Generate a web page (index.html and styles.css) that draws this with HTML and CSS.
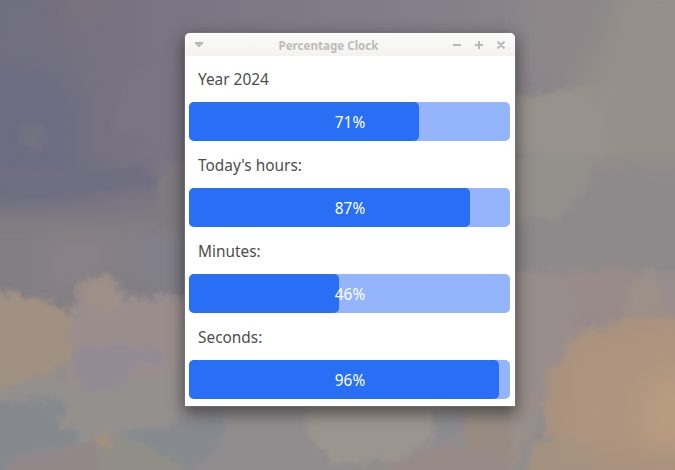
FILE: index.html
```html
<!DOCTYPE html>
<html lang="en">
<head>
<meta charset="utf-8">
<title>Percentage Clock</title>
<link rel="stylesheet" href="styles.css">
</head>
<body>
<svg class="wallpaper" viewBox="0 0 675 470" preserveAspectRatio="none" aria-hidden="true">
  <defs>
    <linearGradient id="sky" x1="0" y1="0" x2="1" y2="0">
      <stop offset="0" stop-color="#716f80"/>
      <stop offset=".3" stop-color="#7b7683"/>
      <stop offset=".7" stop-color="#85808a"/>
      <stop offset="1" stop-color="#918c8a"/>
    </linearGradient>
    <filter id="soft" x="-30%" y="-30%" width="160%" height="160%" color-interpolation-filters="sRGB">
      <feGaussianBlur stdDeviation="13"/>
    </filter>
    <filter id="brush" x="-15%" y="-15%" width="130%" height="130%" color-interpolation-filters="sRGB">
      <feTurbulence type="fractalNoise" baseFrequency=".07" numOctaves="4" seed="7" result="n"/>
      <feGaussianBlur in="SourceGraphic" stdDeviation="3" result="b"/>
      <feDisplacementMap in="b" in2="n" scale="16" xChannelSelector="R" yChannelSelector="G"/>
    </filter>
  </defs>
  <rect width="675" height="470" fill="url(#sky)"/>
  <g filter="url(#soft)">
    <path fill="#6c6d82" d="M-20 70H50L80 110 75 195H-20z"/>
    <path fill="#706f80" d="M-20 -20H50V20H-20z"/>
    <path fill="#7a717c" d="M65 -20H110L95 30H65z"/>
    <path fill="#8d8789" d="M520 -20H600L590 85H520z"/>
    <path fill="#959089" d="M700 -20H625L600 60 570 95 550 170 700 210z"/>
    <path fill="#827e83" d="M-40 210H190V320H-40z"/>
    <path fill="#898185" d="M50 235H120L100 290H40z"/>
    <path fill="#817f89" d="M125 230H190V290H135z"/>
    <path fill="#8e898b" d="M500 165H710V280H500z"/>
    <path fill="#918d8e" d="M-40 330H710V510H-40z"/>
  </g>
  <g filter="url(#brush)">
    <path fill="#747280" d="M20 125H45V152H20z"/>
    <path fill="#7a7582" d="M112 118L130 75 190 55V155L170 148 135 135 115 132z"/>
    <path fill="#706f81" d="M0 165H145L158 188 110 190 80 196 30 199 0 197z"/>
    <path fill="#7e7b81" d="M160 168L190 156V230H155z"/>
    <path fill="#97928b" d="M510 98L545 92 590 85 610 120V155L575 160 510 150z"/>
    <path fill="#93908c" d="M510 155H600L585 190 560 220H515z"/>
    <path fill="#8d888a" d="M605 175L640 170 645 210 690 210V270H510V235L570 215z"/>
    <path fill="#988d8d" d="M500 272L570 271 620 268 690 273V400H500z"/>
    <path fill="#988b89" d="M575 276L617 266 640 272 650 320 575 335z"/>
    <path fill="#9c9089" d="M630 279L655 275 665 310 625 320z"/>
    <path fill="#9a8e8d" d="M68 320L85 278 115 280 128 300 190 294V390H65z"/>
    <path fill="#9e8f88" d="M80 285L88 277 113 282 123 304 105 315 82 305z"/>
    <path fill="#938a94" d="M75 350L120 345 165 350V365L140 362 105 400 75 380z"/>
    <path fill="#a09182" d="M-20 288L20 295 65 305 72 330 70 364 45 376 0 389H-20z"/>
    <path fill="#93908e" d="M-20 392L55 378 90 392 190 366V432L120 445H-20z"/>
    <path fill="#85898d" d="M-20 407L25 400 62 400 60 424 78 436 70 448 30 455 10 480H-20z"/>
    <path fill="#868a8e" d="M118 432L160 428 220 412 225 430 208 455 190 475 160 455 135 442z"/>
    <path fill="#938889" d="M10 463L35 452 65 450 75 442 100 440 105 480H5z"/>
    <path fill="#a09081" d="M97 433H111V448H95z"/>
    <path fill="#918e87" d="M100 450L120 438 155 448 175 462 170 490H100z"/>
    <path fill="#9c958f" d="M306 395H445L440 435 400 460 335 463 320 448 306 427z"/>
    <path fill="#8b8b8e" d="M435 413L465 415 458 440 430 448z"/>
    <path fill="#968a87" d="M390 465L430 450 460 445 515 450V490H380z"/>
    <path fill="#968c83" d="M465 400H520V460L465 453z"/>
    <path fill="#9a8f89" d="M510 390L545 395 530 430 515 470H510z"/>
    <path fill="#a9927f" d="M545 395L548 368 565 362 565 345 580 332 605 328 630 320 655 317 690 318V490H535L535 460 550 440 544 412z"/>
    <path fill="#a49280" d="M535 445L570 430 600 450 590 490H520z"/>
  </g>
  <g filter="url(#soft)">
    <path fill="#ae957f" d="M575 350L690 320V450H565z"/>
    <path fill="#b99b80" d="M645 385L700 365V450H638z"/>
  </g>
</svg>
<main class="window">
  <header class="titlebar">
    <svg class="menu" viewBox="0 0 9 6" aria-hidden="true"><path d="M.4 0H8.6V1.2L4.5 5.6.4 1.2z"/></svg>
    <h1 class="title">Percentage Clock</h1>
    <svg class="controls" viewBox="0 0 54 10" aria-hidden="true">
      <path d="M1 5H9M23 5H31M27 1V9M45.5 1.5L52.5 8.5M52.5 1.5L45.5 8.5"/>
    </svg>
  </header>
  <section class="content">
    <p class="label">Year 2024</p>
    <div class="bar"><div class="fill" style="width:230px"></div><span class="value">71%</span></div>
    <p class="label">Today's hours:</p>
    <div class="bar"><div class="fill" style="width:281px"></div><span class="value">87%</span></div>
    <p class="label">Minutes:</p>
    <div class="bar"><div class="fill" style="width:150px"></div><span class="value">46%</span></div>
    <p class="label">Seconds:</p>
    <div class="bar"><div class="fill" style="width:310px"></div><span class="value">96%</span></div>
  </section>
</main>
</body>
</html>
```
FILE: styles.css
```css
* { box-sizing: border-box; }
body {
  margin: 0;
  height: 470px;
  overflow: hidden;
  padding: 33px 0 0 185px;
  font-family: "Noto Sans", sans-serif;
  background: #888288;
}
.wallpaper {
  position: absolute;
  inset: 0;
  width: 675px;
  height: 470px;
  z-index: -1;
}
.window {
  width: 330px;
  height: 373px;
  background: #fff;
  border-radius: 5px 5px 0 0;
  box-shadow: 0 0 0 1px rgba(120, 120, 120, .6), 0 6px 15px 2px rgba(25, 25, 30, .55);
}
.titlebar {
  display: flex;
  align-items: center;
  height: 23px;
  padding: 1px 9px 0 9px;
  border-radius: 5px 5px 0 0;
  background: linear-gradient(#fbfbfa, #f4f3f2);
}
.menu { width: 10px; height: 6px; fill: #b8b8b8; }
.title {
  flex: 1;
  margin: 0;
  padding-top: 1px;
  padding-left: 1px;
  font-size: 11.6px;
  line-height: 22px;
  font-weight: 700;
  text-align: center;
  color: #bdbcbb;
}
.controls {
  width: 54px;
  height: 10px;
  fill: none;
  stroke: #b9b9b9;
  stroke-width: 2;
}
.content { padding: 0 5px 0 4px; }
.label {
  height: 47px;
  margin: 0;
  padding-left: 9px;
  font-size: 15.4px;
  line-height: 50px;
  color: #4d4d4d;
}
.label:first-child { height: 46px; line-height: 48px; }
.bar {
  display: grid;
  grid-template-rows: 39px;
  height: 39px;
  border-radius: 5px;
  background: #94b5fc;
}
.fill, .value { grid-area: 1 / 1; }
.fill { border-radius: 5px; background: #286ff6; }
.value {
  padding-left: 1px;
  text-align: center;
  font-size: 15.4px;
  line-height: 42px;
  color: #fff;
}
```
